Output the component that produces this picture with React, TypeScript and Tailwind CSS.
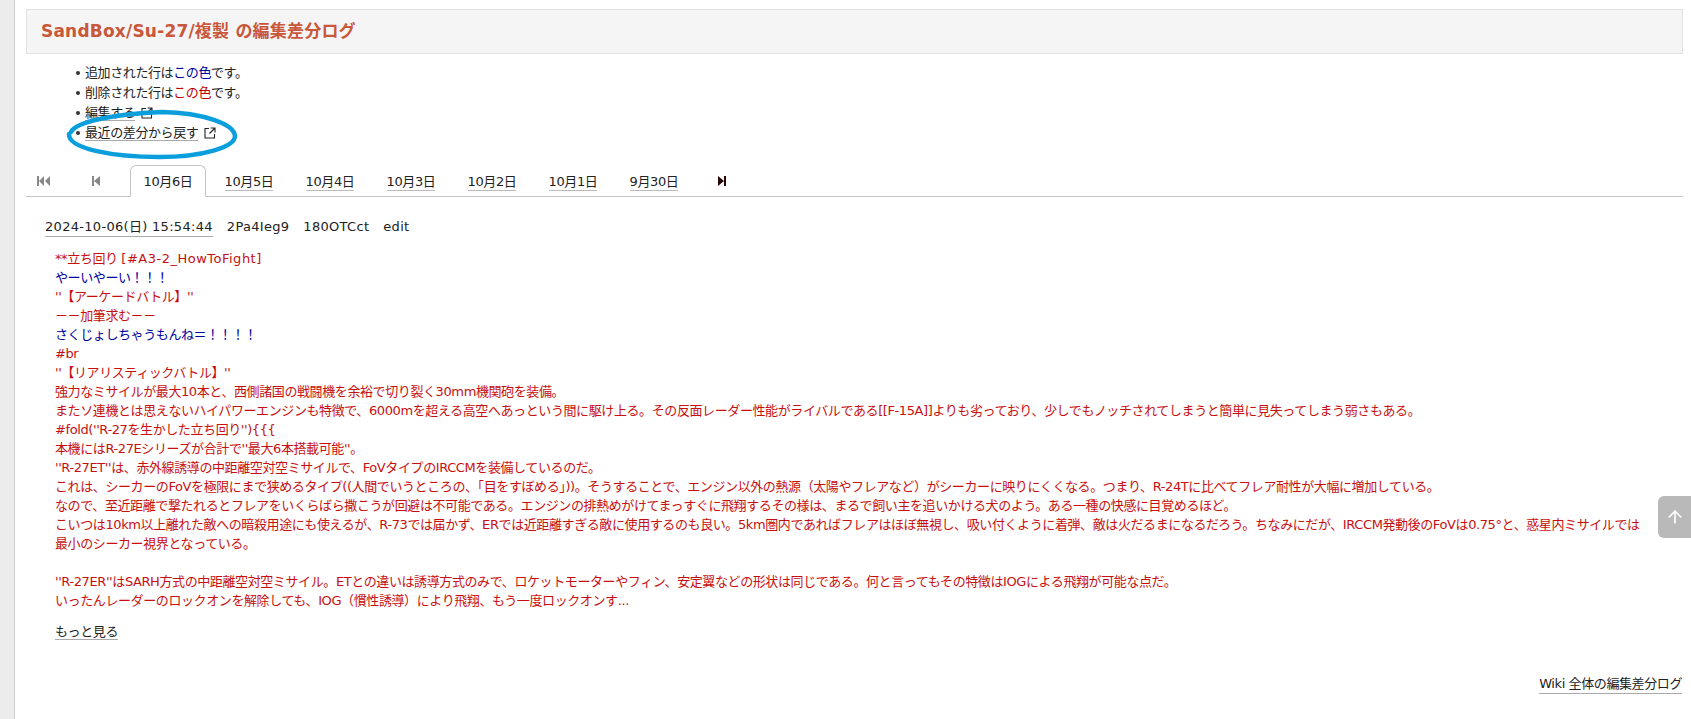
import { ArrowUp } from 'lucide-react';

const tabs = ['10月5日', '10月4日', '10月3日', '10月2日', '10月1日', '9月30日'];

const diffLines: { text: string; color: 'red' | 'blue' }[] = [
    { text: 'やーいやーい！！！', color: 'blue' },
    { text: "''【アーケードバトル】''", color: 'red' },
    { text: '－－加筆求む－－', color: 'red' },
    { text: 'さくじょしちゃうもんね＝！！！！', color: 'blue' },
    { text: '#br', color: 'red' },
    { text: "''【リアリスティックバトル】''", color: 'red' },
    { text: '強力なミサイルが最大10本と、西側諸国の戦闘機を余裕で切り裂く30mm機関砲を装備。', color: 'red' },
    { text: 'またソ連機とは思えないハイパワーエンジンも特徴で、6000mを超える高空へあっという間に駆け上る。その反面レーダー性能がライバルである[[F-15A]]よりも劣っており、少しでもノッチされてしまうと簡単に見失ってしまう弱さもある。', color: 'red' },
    { text: "#fold(''R-27を生かした立ち回り''){{{", color: 'red' },
    { text: "本機にはR-27Eシリーズが合計で''最大6本搭載可能''。", color: 'red' },
    { text: "''R-27ET''は、赤外線誘導の中距離空対空ミサイルで、FoVタイプのIRCCMを装備しているのだ。", color: 'red' },
    { text: 'これは、シーカーのFoVを極限にまで狭めるタイプ((人間でいうところの、「目をすぼめる」))。そうすることで、エンジン以外の熱源（太陽やフレアなど）がシーカーに映りにくくなる。つまり、R-24Tに比べてフレア耐性が大幅に増加している。', color: 'red' },
    { text: 'なので、至近距離で撃たれるとフレアをいくらばら撒こうが回避は不可能である。エンジンの排熱めがけてまっすぐに飛翔するその様は、まるで飼い主を追いかける犬のよう。ある一種の快感に目覚めるほど。', color: 'red' },
    { text: 'こいつは10km以上離れた敵への暗殺用途にも使えるが、R-73では届かず、ERでは近距離すぎる敵に使用するのも良い。5km圏内であればフレアはほぼ無視し、吸い付くように着弾、敵は火だるまになるだろう。ちなみにだが、IRCCM発動後のFoVは0.75°と、惑星内ミサイルでは', color: 'red' },
    { text: '最小のシーカー視界となっている。', color: 'red' },
    { text: '\u00a0', color: 'red' },
    { text: "''R-27ER''はSARH方式の中距離空対空ミサイル。ETとの違いは誘導方式のみで、ロケットモーターやフィン、安定翼などの形状は同じである。何と言ってもその特徴はIOGによる飛翔が可能な点だ。", color: 'red' },
    { text: 'いったんレーダーのロックオンを解除しても、IOG（慣性誘導）により飛翔、もう一度ロックオンす...', color: 'red' },
];

const ExternalIcon = () => (
    <svg width="12" height="12" viewBox="0 0 12 12" fill="none" stroke="#222" strokeWidth="1.1" className="ml-1.5 inline-block -translate-y-px">
        <path d="M5 1.5H1v9.5h9.5V7" />
        <path d="M6.5 1H11v4.5M11 1 5.5 6.5" />
    </svg>
);

const Pager = ({ dir, color }: { dir: 'first' | 'prev' | 'next'; color: string }) => (
    <svg width="14" height="10" viewBox="0 0 14 10" fill={color}>
        {dir === 'first' && <path d="M0 0h2v10H0zM7 0v10L2 5zM13 0v10L8 5z" />}
        {dir === 'prev' && <path d="M3 0h2v10H3zM11 0v10L5 5z" />}
        {dir === 'next' && <path d="M3 0v10l6-5zM9 0h2v10H9z" />}
    </svg>
);

export default function App() {
    return (
        <div className="relative flex min-h-[719px] bg-white font-['DejaVu_Sans','Noto_Sans_CJK_JP',sans-serif] text-[13px] tracking-[-0.4px] text-[#222]">
            {/* Side strip */}
            <div className="w-[15px] shrink-0 border-r border-[#d0d0d0] bg-[#ececec]" />

            <main className="min-w-0 flex-1 pl-[11px] pr-2 pt-[9px]">
                <h1 className="flex h-[45px] items-center border border-[#e2e2e2] bg-[#f5f5f5] px-[14px] text-[17px] font-bold tracking-[0.2px] text-[#c9573a]">
                    SandBox/Su-27/複製 の編集差分ログ
                </h1>

                <ul className="mt-[9px] pl-[59px] leading-[20px]">
                    <li className="relative before:absolute before:-left-[9px] before:top-[8px] before:size-1 before:rounded-full before:bg-[#333] before:content-['']">
                        追加された行は<span className="text-[#0000a0]">この色</span>です。
                    </li>
                    <li className="relative before:absolute before:-left-[9px] before:top-[8px] before:size-1 before:rounded-full before:bg-[#333] before:content-['']">
                        削除された行は<span className="text-[#c00000]">この色</span>です。
                    </li>
                    <li className="relative before:absolute before:-left-[9px] before:top-[8px] before:size-1 before:rounded-full before:bg-[#333] before:content-['']">
                        <span className="border-b border-[#aaa]">編集する</span>
                        <ExternalIcon />
                    </li>
                    <li className="relative before:absolute before:-left-[9px] before:top-[8px] before:size-1 before:rounded-full before:bg-[#333] before:content-['']">
                        <span className="border-b border-[#aaa]">最近の差分から戻す</span>
                        <ExternalIcon />
                    </li>
                </ul>

                {/* Tabs */}
                <div className="mt-[22px] flex h-[32px] items-center border-b border-[#c4c4c4]">
                    <div className="flex w-[36px] justify-center"><Pager dir="first" color="#888" /></div>
                    <div className="ml-[16px] flex w-[36px] justify-center"><Pager dir="prev" color="#888" /></div>
                    <div className="-mb-px ml-[16px] flex h-[32px] w-[76px] items-center justify-center rounded-t-md border border-b-white border-[#c4c4c4] bg-white pt-0.5">
                        10月6日
                    </div>
                    {tabs.map((t) => (
                        <div key={t} className="ml-[5px] flex w-[76px] justify-center pt-0.5">
                            <span className="border-b border-[#bbb] leading-[17px]">{t}</span>
                        </div>
                    ))}
                    <div className="ml-[12px] flex w-[36px] justify-center"><Pager dir="next" color="#2a0505" /></div>
                </div>

                {/* Diff entry */}
                <div className="mt-[21px] flex gap-[14px] pl-[19px] leading-[18px] tracking-[0.3px]">
                    <span className="border-b border-[#aaa]">2024-10-06(日) 15:54:44</span>
                    <span>2Pa4Ieg9</span>
                    <span>180OTCct</span>
                    <span>edit</span>
                </div>

                <div className="mt-[12px] pl-[29px] leading-[19px]">
                    <div className="text-[#c80f0f]">
                        **立ち回り <span className="tracking-[0.5px]">[#A3-2_HowToFight]</span>
                    </div>
                    {diffLines.map((line, i) => (
                        <div key={i} className={line.color === 'red' ? 'text-[#c80f0f]' : 'text-[#0000a0]'}>
                            {line.text}
                        </div>
                    ))}
                </div>

                <div className="mt-[13px] pl-[29px] leading-[18px]">
                    <span className="border-b border-[#aaa]">もっと見る</span>
                </div>

                <div className="mt-[34px] flex justify-end pr-[1px] leading-[18px]">
                    <span className="border-b border-[#aaa]">Wiki 全体の編集差分ログ</span>
                </div>
            </main>

            {/* Hand-drawn annotation */}
            <svg className="pointer-events-none absolute left-[62px] top-[105px]" width="180" height="60" viewBox="0 0 180 60" fill="none">
                <path
                    d="M9 27C14 17 50 9 100 7c42 1 72 12 73 24 0 11-32 21-76 21C52 52 6 44 7 29"
                    stroke="#0a9fdc"
                    strokeWidth="4.5"
                    strokeLinecap="round"
                />
            </svg>

            {/* Back to top */}
            <div className="absolute right-0 top-[496px] flex h-[42px] w-[33px] items-center justify-center rounded-l-md bg-[#b9b9b9]">
                <ArrowUp size={20} className="text-white" />
            </div>
        </div>
    );
}
